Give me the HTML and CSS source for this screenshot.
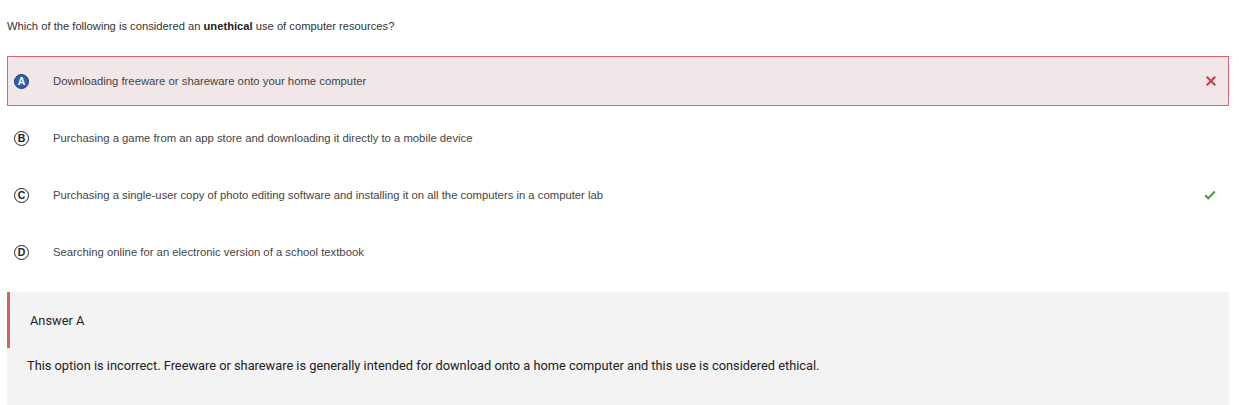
FILE: index.html
```html
<!DOCTYPE html>
<html>
<head>
<meta charset="utf-8">
<link rel="stylesheet" href="styles.css">
</head>
<body>
<div class="page">
  <p class="question">Which of the following is considered an <b>unethical</b> use of computer resources?</p>
  <div class="options">
    <div class="option selected">
      <span class="letter filled">A</span>
      <span class="text">Downloading freeware or shareware onto your home computer</span>
      <svg class="mark" width="10" height="10" viewBox="0 0 10 10"><path d="M1.5 1.5 L8.5 8.5 M8.5 1.5 L1.5 8.5" stroke="#c8404f" stroke-width="2.2" stroke-linecap="square"/></svg>
    </div>
    <div class="option">
      <span class="letter">B</span>
      <span class="text">Purchasing a game from an app store and downloading it directly to a mobile device</span>
    </div>
    <div class="option">
      <span class="letter">C</span>
      <span class="text">Purchasing a single-user copy of photo editing software and installing it on all the computers in a computer lab</span>
      <svg class="mark" width="12" height="10" viewBox="0 0 12 10"><path d="M1.2 5.2 L4.3 8.2 L10.8 1.6" fill="none" stroke="#4f9a45" stroke-width="2.2"/></svg>
    </div>
    <div class="option">
      <span class="letter">D</span>
      <span class="text">Searching online for an electronic version of a school textbook</span>
    </div>
  </div>
  <div class="feedback">
    <div class="fb-head">Answer A</div>
    <div class="fb-body">This option is incorrect. Freeware or shareware is generally intended for download onto a home computer and this use is considered ethical.</div>
  </div>
</div>
</body>
</html>
```
FILE: styles.css
```css
html, body {
  margin: 0;
  padding: 0;
  background: #ffffff;
}
.page {
  padding: 0 16px 0 7px;
  font-family: "Liberation Sans", Arial, sans-serif;
}
.question {
  margin: 0;
  padding-top: 19px;
  height: 37px;
  font-size: 11.2px;
  line-height: 14px;
  color: #333333;
}
.question b {
  color: #222222;
}
.options {
  display: flex;
  flex-direction: column;
  gap: 7px;
}
.option {
  height: 50px;
  box-sizing: border-box;
  display: flex;
  align-items: center;
  border: 1px solid transparent;
  padding: 0 12px 0 6px;
  font-size: 11.3px;
  color: #444444;
}
.option.selected {
  background: #f2e7e8;
  border-color: #d8646f;
}
.letter {
  width: 15px;
  height: 15px;
  box-sizing: border-box;
  border: 1.3px solid #222222;
  border-radius: 50%;
  display: flex;
  align-items: center;
  justify-content: center;
  font-size: 10.5px;
  font-weight: bold;
  color: #222222;
  margin-right: 24px;
  flex: none;
}
.letter.filled {
  background: #2d5fae;
  border-color: #1c3d78;
  color: #ffffff;
}
.text {
  flex: 1;
  line-height: 14px;
}
.mark {
  flex: none;
}
.feedback {
  margin-top: 15px;
  background: #f3f3f3;
  height: 120px;
  font-family: Roboto, "Liberation Sans", sans-serif;
  color: #222222;
  font-size: 12.8px;
}
.fb-head {
  height: 56px;
  box-sizing: border-box;
  border-left: 3px solid #d25f69;
  display: flex;
  align-items: center;
  padding-left: 20px;
}
.fb-body {
  padding: 11px 0 0 20px;
  line-height: 14px;
}
```
